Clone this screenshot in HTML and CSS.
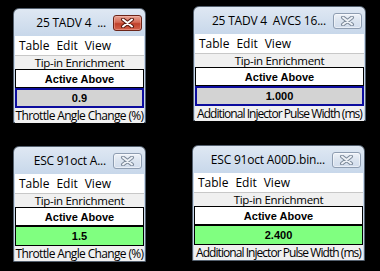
FILE: index.html
```html
<!DOCTYPE html>
<html>
<head>
<meta charset="utf-8">
<link rel="stylesheet" href="styles.css">
</head>
<body>
<div class="desk">
  <div class="win w1 active">
    <div class="titlebar">
      <span class="title">25 TADV 4 &nbsp;...</span>
      <span class="close"><svg width="15" height="10" viewBox="0 0 15 10"><path d="M3 1.5 L12 8.5 M12 1.5 L3 8.5" stroke="#5a1a10" stroke-width="4" stroke-linecap="round"/><path d="M3 1.5 L12 8.5 M12 1.5 L3 8.5" stroke="#ffffff" stroke-width="2" stroke-linecap="round"/></svg></span>
    </div>
    <div class="menu"><span>Table</span><span>Edit</span><span>View</span></div>
    <div class="content">
      <div class="heading">Tip-in Enrichment</div>
      <div class="cell head">Active Above</div>
      <div class="cell val sel">0.9</div>
      <div class="unit">Throttle Angle Change (%)</div>
    </div>
  </div>

  <div class="win w2 wide">
    <div class="titlebar">
      <span class="title">25 TADV 4 &nbsp;AVCS 16...</span>
      <span class="close"><svg width="15" height="10" viewBox="0 0 15 10"><path d="M3 1.5 L12 8.5 M12 1.5 L3 8.5" stroke="#7d8a9a" stroke-width="4" stroke-linecap="round"/><path d="M3 1.5 L12 8.5 M12 1.5 L3 8.5" stroke="#eef2f7" stroke-width="2" stroke-linecap="round"/></svg></span>
    </div>
    <div class="menu"><span>Table</span><span>Edit</span><span>View</span></div>
    <div class="content">
      <div class="heading">Tip-in Enrichment</div>
      <div class="cell head">Active Above</div>
      <div class="cell val sel">1.000</div>
      <div class="unit">Additional Injector Pulse Width (ms)</div>
    </div>
  </div>

  <div class="win w3">
    <div class="titlebar">
      <span class="title">ESC 91oct A...</span>
      <span class="close"><svg width="15" height="10" viewBox="0 0 15 10"><path d="M3 1.5 L12 8.5 M12 1.5 L3 8.5" stroke="#7d8a9a" stroke-width="4" stroke-linecap="round"/><path d="M3 1.5 L12 8.5 M12 1.5 L3 8.5" stroke="#eef2f7" stroke-width="2" stroke-linecap="round"/></svg></span>
    </div>
    <div class="menu"><span>Table</span><span>Edit</span><span>View</span></div>
    <div class="content">
      <div class="heading">Tip-in Enrichment</div>
      <div class="cell head">Active Above</div>
      <div class="cell val green">1.5</div>
      <div class="unit">Throttle Angle Change (%)</div>
    </div>
  </div>

  <div class="win w4 wide">
    <div class="titlebar">
      <span class="title">ESC 91oct A00D.bin...</span>
      <span class="close"><svg width="15" height="10" viewBox="0 0 15 10"><path d="M3 1.5 L12 8.5 M12 1.5 L3 8.5" stroke="#7d8a9a" stroke-width="4" stroke-linecap="round"/><path d="M3 1.5 L12 8.5 M12 1.5 L3 8.5" stroke="#eef2f7" stroke-width="2" stroke-linecap="round"/></svg></span>
    </div>
    <div class="menu"><span>Table</span><span>Edit</span><span>View</span></div>
    <div class="content">
      <div class="heading">Tip-in Enrichment</div>
      <div class="cell head">Active Above</div>
      <div class="cell val green">2.400</div>
      <div class="unit">Additional Injector Pulse Width (ms)</div>
    </div>
  </div>
</div>
</body>
</html>
```
FILE: styles.css
```css
html, body {
  margin: 0;
  padding: 0;
  background: #000;
}
.desk {
  position: relative;
  width: 380px;
  height: 271px;
  background: #000;
  font-family: "Open Sans", "Noto Sans", "DejaVu Sans", sans-serif;
  color: #000;
}
.win {
  position: absolute;
  box-sizing: border-box;
  display: flex;
  flex-direction: column;
  border: 1px solid #54606e;
  border-radius: 6px 6px 0 0;
  background: linear-gradient(#dfe8f3, #c7d7ea 28px, #c9d8ea);
  padding: 0 1px 1px 1px;
}
.w1 { left: 13px; top: 8px; width: 133px; height: 115px; }
.w2 { left: 193px; top: 6px; width: 173px; height: 115px; }
.w3 { left: 13px; top: 146px; width: 133px; height: 116px; }
.w4 { left: 192px; top: 145px; width: 173px; height: 116px; }

.titlebar {
  height: 27px;
  display: flex;
  align-items: center;
  justify-content: flex-end;
  gap: 7px;
  padding-right: 2px;
  flex: none;
}
.title {
  font-size: 12px;
  color: #000;
  white-space: nowrap;
  letter-spacing: -0.2px;
}
.close {
  box-sizing: border-box;
  width: 29px;
  height: 16px;
  border-radius: 3px;
  border: 1px solid #8e9db1;
  background: linear-gradient(#eef2f8, #dbe4ef 50%, #d2dded);
  display: flex;
  align-items: center;
  justify-content: center;
  box-shadow: inset 0 0 0 1px rgba(255,255,255,0.5);
}
.active .close {
  border-color: #6b2418;
  background: linear-gradient(#e7a494, #d56a55 45%, #c0402a 55%, #d3634c);
  box-shadow: inset 0 0 0 1px rgba(255,200,190,0.4);
}
.menu {
  background: #fff;
  height: 19px;
  display: flex;
  align-items: center;
  gap: 7px;
  padding-left: 4px;
  font-size: 12px;
  border-bottom: 1px solid #c8c8c8;
  flex: none;
}
.content {
  flex: 1;
  background: #f0f0f0;
  display: flex;
  flex-direction: column;
}
.heading {
  height: 13px;
  font-size: 11.5px;
  line-height: 13px;
  letter-spacing: -0.3px;
  text-align: center;
  flex: none;
}
.cell {
  box-sizing: border-box;
  height: 19px;
  display: flex;
  align-items: center;
  justify-content: center;
  font-size: 11px;
  font-weight: bold;
  font-family: "Liberation Sans", Arial, sans-serif;
  flex: none;
}
.head {
  background: #fff;
  border: 1px solid #000;
}
.val {
  height: 20px;
  border: 1px solid #000;
}
.sel {
  background: #d3d3d3;
  border: 2px solid #0c0c9e;
}
.green {
  background: #80ff80;
}
.unit {
  flex: 1;
  font-size: 12px;
  line-height: 15px;
  text-align: center;
  white-space: nowrap;
  letter-spacing: -0.65px;
}
.wide .unit {
  letter-spacing: -0.95px;
}
```
